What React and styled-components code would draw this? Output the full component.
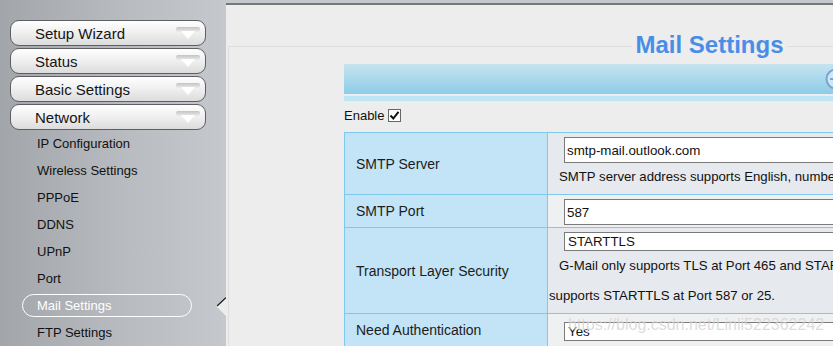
import React from "react";
import styled, { createGlobalStyle } from "styled-components";

const baseFont = '"Liberation Sans", Arial, sans-serif';
const pageBg = '#ededed';
const cellBorder = '#7ec8ea';

const GlobalStyle = createGlobalStyle`
  html, body {
    margin: 0;
    padding: 0;
    background: #c5c8cc;
    font-family: ${baseFont};
  }
`;

const Shell = styled.div`
  display: flex;
  width: 833px;
  height: 346px;
  overflow: hidden;
  background: #c5c8cc;
`;

const Sidebar = styled.nav`
  flex: 0 0 226px;
  display: flex;
  flex-direction: column;
  padding-top: 18px;
  background: linear-gradient(to right, #a2a6ab 0%, #b8bbc0 55%, #c5c8cc 100%);
  box-sizing: border-box;
`;

const MenuButton = styled.div`
  flex-shrink: 0;
  display: flex;
  align-items: center;
  justify-content: space-between;
  width: 196px;
  height: 26px;
  margin: 2px 0 0 10px;
  box-sizing: border-box;
  padding: 0 5px 0 24px;
  border: 1px solid #5d5f62;
  border-radius: 9px;
  background: linear-gradient(to bottom, #fefefe 0%, #f1f1f1 45%, #dcdcdc 100%);
  font-size: 15px;
  color: #151515;
`;

const SubList = styled.div`
  flex-shrink: 0;
  display: flex;
  flex-direction: column;
`;

const SubRow = styled.div`
  flex-shrink: 0;
  display: flex;
  align-items: center;
  height: 27px;
`;

const SubLabel = styled.span`
  display: flex;
  align-items: center;
  box-sizing: border-box;
  height: 23px;
  width: 170px;
  margin-left: ${({ active }) => (active ? '22px' : '0')};
  padding-left: ${({ active }) => (active ? '14px' : '37px')};
  border: ${({ active }) => (active ? '1.5px solid #ffffff' : 'none')};
  border-radius: 12px;
  font-size: 13px;
  color: ${({ active }) => (active ? '#ffffff' : '#111111')};
`;

const Marker = styled.svg`
  margin-left: auto;
  display: block;
`;

const Main = styled.main`
  flex: 1;
  margin-top: 3px;
  border-top: 2px solid #777777;
  background: ${pageBg};
  padding: 41px 0 0 2px;
  box-sizing: border-box;
  min-width: 0;
`;

const Panel = styled.section`
  width: 962px;
  border-top: 1px solid #dedede;
  border-left: 1px solid #dedede;
  box-sizing: border-box;
`;

const Title = styled.h1`
  width: fit-content;
  margin: -16px auto 0;
  padding: 0 3px;
  background: ${pageBg};
  font-size: 24px;
  line-height: 28px;
  font-weight: bold;
  color: #4a8de6;
`;

const Content = styled.div`
  margin: 5px 0 0 115px;
  width: 730px;
`;

const Banner = styled.div`
  display: flex;
  align-items: center;
  height: 30px;
  background: linear-gradient(to bottom, #c6e3ee 0%, #a9d8ec 50%, #8dcce8 100%);
`;

const BannerStrip = styled.div`
  height: 5px;
  margin-top: 2px;
  background: #bde5f4;
`;

const EnableRow = styled.label`
  display: flex;
  align-items: center;
  gap: 4px;
  height: 31px;
  padding-bottom: 2px;
  box-sizing: border-box;
  font-size: 13px;
  color: #111;
`;

const CheckBox = styled.span`
  display: inline-flex;
  align-items: center;
  justify-content: center;
  width: 13px;
  height: 13px;
  box-sizing: border-box;
  border: 1px solid #666;
  background: #fff;
`;

const Table = styled.table`
  width: 730px;
  border-collapse: collapse;
  table-layout: fixed;
`;

const LabelCell = styled.td`
  width: 203px;
  box-sizing: border-box;
  height: ${({ h }) => h}px;
  padding: 0 0 0 11px;
  border: 1px solid ${cellBorder};
  background: #c3e4f7;
  font-size: 14px;
  color: #1c1c1c;
  vertical-align: middle;
`;

const ValueCell = styled.td`
  position: relative;
  padding: ${({ pt }) => pt || 4}px 0 0 1px;
  border: 1px solid ${cellBorder};
  background: ${({ light }) => (light ? '#eff0f1' : '#e6e9ed')};
  vertical-align: top;
  font-size: 13.2px;
  color: #111;
`;

const TextInput = styled.input`
  display: block;
  width: 340px;
  height: 26px;
  margin-left: 15px;
  box-sizing: border-box;
  padding: 0 2px;
  border: 1px solid #7a7a7a;
  background: #fff;
  font-family: ${baseFont};
  font-size: 13.33px;
  color: #111;
  outline: none;
`;

const Select = styled.select`
  display: block;
  width: 340px;
  height: 19px;
  margin-left: 15px;
  box-sizing: border-box;
  padding: 0 3px;
  border: 1px solid #7a7a7a;
  border-radius: 0;
  background: #fff;
  appearance: none;
  font-family: ${baseFont};
  font-size: 13.33px;
  color: #111;
  outline: none;
`;

const Hint = styled.div`
  white-space: nowrap;
  line-height: ${({ lh }) => lh}px;
`;

const Indent = styled.span`
  padding-left: 10px;
`;

const Watermark = styled.span`
  position: absolute;
  left: 20px;
  top: 2px;
  font-size: 16px;
  color: rgba(185, 185, 185, 0.5);
  text-shadow: 0 0 1px rgba(255, 255, 255, 0.6);
  white-space: nowrap;
  pointer-events: none;
`;

function MenuArrow() {
  return (
    <svg width="24" height="13" viewBox="0 0 24 13">
      <defs>
        <linearGradient id="band" x1="0" y1="0" x2="0" y2="1">
          <stop offset="0" stopColor="#c4c4c4" />
          <stop offset="1" stopColor="#ebebeb" />
        </linearGradient>
      </defs>
      <rect x="0" y="0" width="24" height="5" rx="2" fill="url(#band)" />
      <polygon points="5,4 19,4 12,12" fill="#ffffff" />
    </svg>
  );
}

function CollapseIcon() {
  return (
    <svg width="22" height="22" viewBox="0 0 22 22" style={{ marginLeft: 481, flexShrink: 0 }}>
      <circle cx="11" cy="11" r="9.5" fill="#cfe6f4" stroke="#7aa4d2" strokeWidth="2" />
      <line x1="5" y1="11" x2="17" y2="11" stroke="#7aa4d2" strokeWidth="2" />
    </svg>
  );
}

const menus = ["Setup Wizard", "Status", "Basic Settings", "Network"];
const subItems = [
  "IP Configuration",
  "Wireless Settings",
  "PPPoE",
  "DDNS",
  "UPnP",
  "Port",
  "Mail Settings",
  "FTP Settings",
];

export default function App() {
  return (
    <>
      <GlobalStyle />
      <Shell>
        <Sidebar>
          {menus.map((m) => (
            <MenuButton key={m}>
              {m}
              <MenuArrow />
            </MenuButton>
          ))}
          <SubList>
            {subItems.map((s) => {
              const active = s === "Mail Settings";
              return (
                <SubRow key={s}>
                  <SubLabel active={active}>{s}</SubLabel>
                  {active && (
                    <Marker width="10" height="20" viewBox="0 0 10 20">
                      <polygon points="10,0 0,10 10,20" fill={pageBg} />
                      <line x1="10" y1="1.5" x2="1" y2="10" stroke="#222" strokeWidth="1.3" />
                    </Marker>
                  )}
                </SubRow>
              );
            })}
          </SubList>
        </Sidebar>

        <Main>
          <Panel>
            <Title>Mail Settings</Title>
            <Content>
              <Banner>
                <CollapseIcon />
              </Banner>
              <BannerStrip />
              <EnableRow>
                Enable
                <CheckBox>
                  <svg width="11" height="11" viewBox="0 0 11 11">
                    <path d="M1.5 5.5 L4.3 8.5 L9.5 1.8" fill="none" stroke="#111" strokeWidth="2" />
                  </svg>
                </CheckBox>
              </EnableRow>
              <Table>
                <tbody>
                  <tr>
                    <LabelCell h={62}>SMTP Server</LabelCell>
                    <ValueCell pt={4}>
                      <TextInput defaultValue="smtp-mail.outlook.com" />
                      <Hint lh={28}>
                        <Indent>SMTP server address supports English, numbers and symbols</Indent>
                      </Hint>
                    </ValueCell>
                  </tr>
                  <tr>
                    <LabelCell h={33}>SMTP Port</LabelCell>
                    <ValueCell pt={4} light>
                      <TextInput defaultValue="587" />
                    </ValueCell>
                  </tr>
                  <tr>
                    <LabelCell h={86}>Transport Layer Security</LabelCell>
                    <ValueCell pt={4}>
                      <Select defaultValue="STARTTLS">
                        <option>STARTTLS</option>
                        <option>TLS</option>
                        <option>None</option>
                      </Select>
                      <Hint lh={30}>
                        <Indent>G-Mail only supports TLS at Port 465 and STARTTLS at Port 587. Hotmail only</Indent>
                        <br />
                        supports STARTTLS at Port 587 or 25.
                      </Hint>
                    </ValueCell>
                  </tr>
                  <tr>
                    <LabelCell h={33}>Need Authentication</LabelCell>
                    <ValueCell pt={8} light>
                      <Select defaultValue="Yes">
                        <option>Yes</option>
                        <option>No</option>
                      </Select>
                      <Watermark>https://blog.csdn.net/Linli522362242</Watermark>
                    </ValueCell>
                  </tr>
                </tbody>
              </Table>
            </Content>
          </Panel>
        </Main>
      </Shell>
    </>
  );
}
